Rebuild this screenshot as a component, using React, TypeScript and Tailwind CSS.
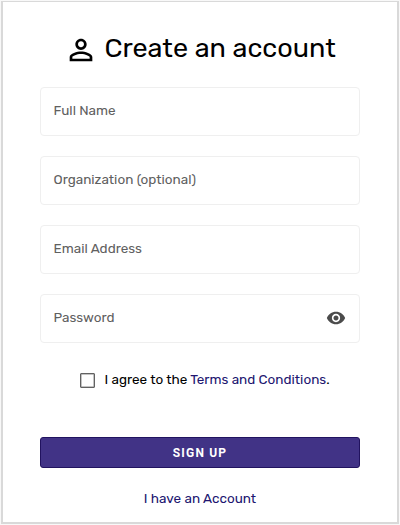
import React from 'react';

function PersonIcon() {
  return (
    <svg viewBox="0 0 24 24" className="h-[34px] w-[34px] shrink-0 fill-black" aria-hidden="true">
      <path d="M12 5.900c1.160 0 2.100.94 2.100 2.100s-.94 2.100-2.100 2.100S9.900 9.160 9.900 8s.94-2.100 2.100-2.100m0 9c2.970 0 6.100 1.460 6.100 2.100v1.100H5.900V17c0-.64 3.130-2.100 6.100-2.100M12 4C9.790 4 8 5.790 8 8s1.790 4 4 4 4-1.790 4-4-1.790-4-4-4zm0 9c-2.670 0-8 1.340-8 4v3h16v-3c0-2.660-5.330-4-8-4z" />
    </svg>
  );
}

function EyeIcon() {
  return (
    <svg viewBox="0 0 24 24" className="h-5 w-5 fill-[#4b4b4b]" aria-hidden="true">
      <path d="M12 4.5C7 4.5 2.73 7.61 1 12c1.73 4.39 6 7.5 11 7.5s9.27-3.11 11-7.5c-1.73-4.39-6-7.5-11-7.5zM12 17c-2.76 0-5-2.24-5-5s2.24-5 5-5 5 2.24 5 5-2.24 5-5 5zm0-8c-1.66 0-3 1.34-3 3s1.34 3 3 3 3-1.34 3-3-1.34-3-3-3z" />
    </svg>
  );
}

type FieldProps = { label: string; children?: React.ReactNode };

function Field({ label, children }: FieldProps) {
  return (
    <div className="flex h-[49px] items-center justify-between rounded-[4px] border border-[#efefef] pr-[13px] pb-[2px] pl-[12.5px]">
      <span className="text-[13.5px] whitespace-nowrap text-[#606060]">{label}</span>
      {children}
    </div>
  );
}

export default function App() {
  return (
    <div className="h-[525px] w-[400px] bg-[#f8f8f8] pt-px pl-px font-['Rubik','Roboto','Liberation_Sans',sans-serif]">
      <main className="flex h-[523px] w-[398px] flex-col border-2 border-t border-[#d9d9d9] bg-white px-[37px]">
        <h1 className="mt-[31px] flex h-[34px] items-center pl-[24px] text-black">
          <PersonIcon />
          <span className="-mt-[5px] ml-[6.5px] text-[27px] leading-[34px] whitespace-nowrap">Create an account</span>
        </h1>
        <div className="mt-[20px] flex flex-col gap-[20px]">
          <Field label="Full Name" />
          <Field label="Organization (optional)" />
          <Field label="Email Address" />
          <Field label="Password">
            <EyeIcon />
          </Field>
        </div>
        <div className="mt-[27px] flex h-5 items-center pl-[40px] text-[13.5px] whitespace-nowrap text-black">
          <span className="h-[15px] w-[15px] rounded-[1px] border-[1.5px] border-[#626262] shadow-[inset_0_0_0_0.5px_#8a8a8a]" />
          <span className="-mt-px ml-[9.5px]">
            I agree to the <a className="text-[#211570]">Terms and Conditions</a>.
          </span>
        </div>
        <button className="mt-[47px] h-[31px] shrink-0 rounded-[3px] border border-[#21135f] bg-[#413386] font-['Roboto','Liberation_Sans',sans-serif] text-[12px] font-bold tracking-[1.2px] text-white">
          SIGN UP
        </button>
        <a className="mt-[20px] text-center text-[13.5px] leading-5 text-[#211570]">I have an Account</a>
      </main>
    </div>
  );
}
